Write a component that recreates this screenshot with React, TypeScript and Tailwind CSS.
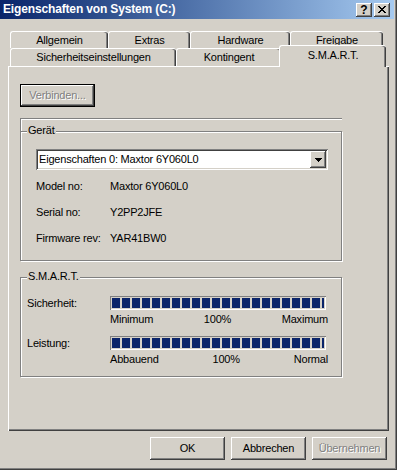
import React from "react";

const raised =
  "shadow-[inset_-1px_-1px_0_#404040,inset_1px_1px_0_#ffffff,inset_-2px_-2px_0_#808080,inset_2px_2px_0_#d4d0c8]";

function Tab({ label, w, h }: { label: string; w: string; h: string }) {
  return (
    <div
      className={`${w} ${h} shrink-0 flex items-center justify-center bg-[#d4d0c8] border-t border-l border-white rounded-tl-[3px] rounded-tr-[3px] shadow-[inset_-1px_0_0_#404040,inset_-2px_0_0_#808080]`}
    >
      {label}
    </div>
  );
}

function Bar() {
  return (
    <div className="w-[216px] h-[14px] p-[2px] shadow-[inset_1px_1px_0_#808080,inset_-1px_-1px_0_#ffffff]">
      <div className="flex h-full gap-[2px] overflow-hidden">
        {Array.from({ length: 22 }).map((_, i) => (
          <div key={i} className="w-[8px] h-full shrink-0 bg-[#0a246a]" />
        ))}
      </div>
    </div>
  );
}

function Button({ label, disabled }: { label: string; disabled?: boolean }) {
  return (
    <div
      className={`w-[75px] h-[23px] flex items-center justify-center ${raised} ${
        disabled ? "text-[#808080] [text-shadow:1px_1px_0_#ffffff]" : "text-black"
      }`}
    >
      {label}
    </div>
  );
}

export default function App() {
  return (
    <div className="w-[397px] h-[470px] bg-[#d4d0c8] flex flex-col overflow-hidden shadow-[inset_-1px_-1px_0_#404040,inset_-2px_-2px_0_#808080] font-['Liberation_Sans',Arial,sans-serif] text-[11px] leading-[13px] text-black tracking-[-0.2px]">
      {/* Title bar */}
      <div className="h-[19px] mr-[3px] shrink-0 flex items-center pl-[3px] pr-[4px] bg-linear-to-r from-[#0a246a] to-[#a6caf0]">
        <span className="text-white font-bold text-[12px] tracking-[-0.15px]">
          Eigenschaften von System (C:)
        </span>
        <div className="ml-auto flex gap-[2px]">
          <div
            className={`w-[16px] h-[14px] flex items-center justify-center bg-[#d4d0c8] ${raised}`}
          >
            <span className="font-bold text-[12px] leading-[12px] text-black tracking-normal">?</span>
          </div>
          <div
            className={`w-[16px] h-[14px] flex items-center justify-center bg-[#d4d0c8] ${raised}`}
          >
            <svg width="8" height="7" viewBox="0 0 8 7" shapeRendering="crispEdges">
              <path d="M0 0h2v1h1v1h2V1h1V0h2v1H7v1H6v1H5v1h1v1h1v1h1v1H6V6H5V5H3v1H2v1H0V6h1V5h1V4h1V3H2V2H1V1H0z" fill="#000" />
            </svg>
          </div>
        </div>
      </div>

      <div className="pl-[8px] pt-[12px] flex flex-col">
        {/* Tabs row 1 */}
        <div className="flex ml-[2px] h-[17px]">
          <Tab label="Allgemein" w="w-[98px]" h="h-[17px]" />
          <Tab label="Extras" w="w-[82px]" h="h-[17px]" />
          <Tab label="Hardware" w="w-[100px]" h="h-[17px]" />
          <Tab label="Freigabe" w="w-[93px]" h="h-[17px]" />
        </div>
        {/* Tabs row 2 */}
        <div className="flex items-end ml-[2px] h-[18px]">
          <Tab label="Sicherheitseinstellungen" w="w-[166px]" h="h-[18px]" />
          <Tab label="Kontingent" w="w-[105px]" h="h-[18px]" />
          <div className="relative z-10 w-[107px] h-[22px] -mx-[2px] -mb-px shrink-0 flex items-center justify-center pb-[2px] bg-[#d4d0c8] border-t border-l border-white rounded-tl-[3px] rounded-tr-[3px] shadow-[inset_-1px_0_0_#404040,inset_-2px_0_0_#808080]">
            S.M.A.R.T.
          </div>
        </div>

        {/* Panel */}
        <div className="w-[381px] h-[365px] border-t border-l border-white shadow-[inset_-1px_-1px_0_#404040,inset_-2px_-2px_0_#808080] pl-[11px] pt-[17px] flex flex-col">
          <div
            className={`w-[75px] h-[23px] flex items-center justify-center text-[#808080] [text-shadow:1px_1px_0_#ffffff] shadow-[inset_0_0_0_1px_#000000,inset_-2px_-2px_0_#404040,inset_2px_2px_0_#ffffff,inset_-3px_-3px_0_#808080,inset_3px_3px_0_#d4d0c8]`}
          >
            Verbinden...
          </div>

          <div className="w-[322px] h-[13px] mt-[11px] border-t border-l border-[#808080] shadow-[inset_1px_1px_0_#ffffff]" />

          {/* Gerät group */}
          <div className="relative w-[322px] border border-[#808080] shadow-[inset_1px_1px_0_#ffffff,1px_1px_0_#ffffff] pt-[17px] pl-[15px] pb-[15px]">
            <span className="absolute left-[6px] top-[-8px] px-[1px] bg-[#d4d0c8]">Gerät</span>
            <div className="w-[292px] h-[21px] bg-white flex items-center pl-[3px] pr-[2px] shadow-[inset_1px_1px_0_#808080,inset_-1px_-1px_0_#ffffff,inset_2px_2px_0_#404040,inset_-2px_-2px_0_#d4d0c8]">
              <span>Eigenschaften 0: Maxtor 6Y060L0</span>
              <div
                className={`ml-auto w-[16px] h-[17px] flex items-center justify-center bg-[#d4d0c8] ${raised}`}
              >
                <svg width="7" height="4" viewBox="0 0 7 4" shapeRendering="crispEdges">
                  <path d="M0 0h7v1H6v1H5v1H4v1H3V3H2V2H1V1H0z" fill="#000" />
                </svg>
              </div>
            </div>
            <div className="mt-[10px] grid grid-cols-[74px_1fr] gap-y-[13px]">
              <span>Model no:</span>
              <span>Maxtor 6Y060L0</span>
              <span>Serial no:</span>
              <span>Y2PP2JFE</span>
              <span>Firmware rev:</span>
              <span>YAR41BW0</span>
            </div>
          </div>

          {/* S.M.A.R.T. group */}
          <div className="relative w-[322px] mt-[16px] border border-[#808080] shadow-[inset_1px_1px_0_#ffffff,1px_1px_0_#ffffff] pt-[18px] pl-[6px] pb-[10px]">
            <span className="absolute left-[6px] top-[-8px] px-[1px] bg-[#d4d0c8]">S.M.A.R.T.</span>
            <div className="flex items-center h-[14px]">
              <span className="w-[83px]">Sicherheit:</span>
              <Bar />
            </div>
            <div className="ml-[83px] mt-[3px] w-[218px] flex justify-between">
              <span>Minimum</span>
              <span>100%</span>
              <span>Maximum</span>
            </div>
            <div className="flex items-center h-[14px] mt-[10px]">
              <span className="w-[83px]">Leistung:</span>
              <Bar />
            </div>
            <div className="ml-[83px] mt-[3px] w-[218px] flex justify-between">
              <span>Abbauend</span>
              <span>100%</span>
              <span>Normal</span>
            </div>
          </div>
        </div>

        {/* Bottom buttons */}
        <div className="w-[381px] mt-[6px] pr-[2px] flex justify-end gap-[6px]">
          <Button label="OK" />
          <Button label="Abbrechen" />
          <Button label="Übernehmen" disabled />
        </div>
      </div>
    </div>
  );
}
